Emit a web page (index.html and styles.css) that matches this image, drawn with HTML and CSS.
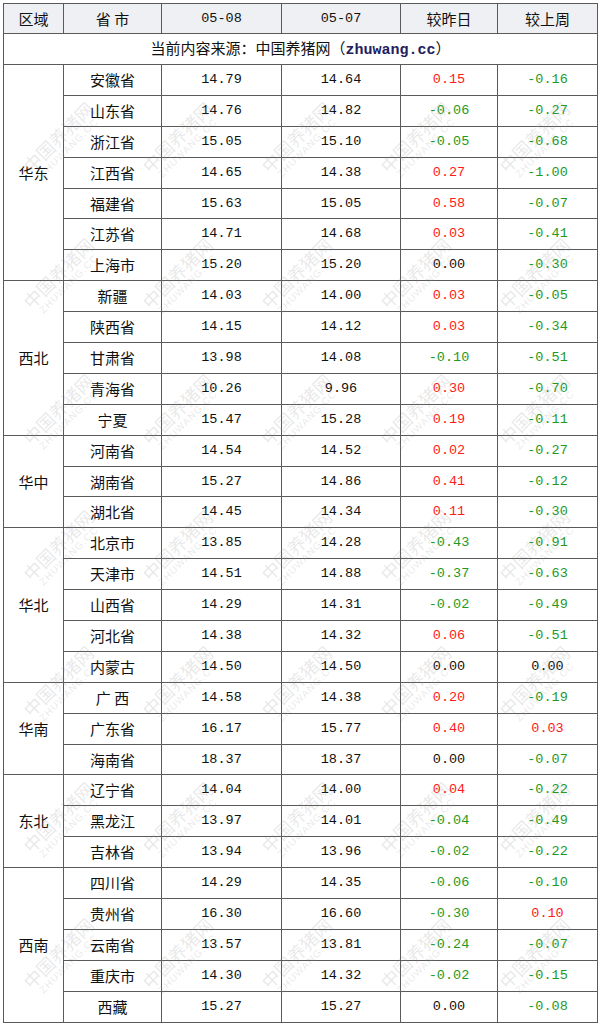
FILE: index.html
```html
<!DOCTYPE html>
<html lang="zh">
<head>
<meta charset="utf-8">
<link rel="stylesheet" href="styles.css">
</head>
<body>
<div class="wrap">
<table class="price">
<colgroup>
<col class="c1"><col class="c2"><col class="c3"><col class="c4"><col class="c5"><col class="c6">
</colgroup>
<thead>
<tr class="head"><th>区域</th><th>省 市</th><th class="num">05-08</th><th class="num">05-07</th><th>较昨日</th><th>较上周</th></tr>
</thead>
<tbody>
<tr class="src"><td colspan="6">当前内容来源：中国养猪网（<b class="site">zhuwang.cc</b>）</td></tr>
<tr><td rowspan="7" class="reg">华东</td><td>安徽省</td><td class="num">14.79</td><td class="num">14.64</td><td class="num up">0.15</td><td class="num dn">-0.16</td></tr>
<tr><td>山东省</td><td class="num">14.76</td><td class="num">14.82</td><td class="num dn">-0.06</td><td class="num dn">-0.27</td></tr>
<tr><td>浙江省</td><td class="num">15.05</td><td class="num">15.10</td><td class="num dn">-0.05</td><td class="num dn">-0.68</td></tr>
<tr><td>江西省</td><td class="num">14.65</td><td class="num">14.38</td><td class="num up">0.27</td><td class="num dn">-1.00</td></tr>
<tr><td>福建省</td><td class="num">15.63</td><td class="num">15.05</td><td class="num up">0.58</td><td class="num dn">-0.07</td></tr>
<tr><td>江苏省</td><td class="num">14.71</td><td class="num">14.68</td><td class="num up">0.03</td><td class="num dn">-0.41</td></tr>
<tr><td>上海市</td><td class="num">15.20</td><td class="num">15.20</td><td class="num">0.00</td><td class="num dn">-0.30</td></tr>
<tr><td rowspan="5" class="reg">西北</td><td>新疆</td><td class="num">14.03</td><td class="num">14.00</td><td class="num up">0.03</td><td class="num dn">-0.05</td></tr>
<tr><td>陕西省</td><td class="num">14.15</td><td class="num">14.12</td><td class="num up">0.03</td><td class="num dn">-0.34</td></tr>
<tr><td>甘肃省</td><td class="num">13.98</td><td class="num">14.08</td><td class="num dn">-0.10</td><td class="num dn">-0.51</td></tr>
<tr><td>青海省</td><td class="num">10.26</td><td class="num">9.96</td><td class="num up">0.30</td><td class="num dn">-0.70</td></tr>
<tr><td>宁夏</td><td class="num">15.47</td><td class="num">15.28</td><td class="num up">0.19</td><td class="num dn">-0.11</td></tr>
<tr><td rowspan="3" class="reg">华中</td><td>河南省</td><td class="num">14.54</td><td class="num">14.52</td><td class="num up">0.02</td><td class="num dn">-0.27</td></tr>
<tr><td>湖南省</td><td class="num">15.27</td><td class="num">14.86</td><td class="num up">0.41</td><td class="num dn">-0.12</td></tr>
<tr><td>湖北省</td><td class="num">14.45</td><td class="num">14.34</td><td class="num up">0.11</td><td class="num dn">-0.30</td></tr>
<tr><td rowspan="5" class="reg">华北</td><td>北京市</td><td class="num">13.85</td><td class="num">14.28</td><td class="num dn">-0.43</td><td class="num dn">-0.91</td></tr>
<tr><td>天津市</td><td class="num">14.51</td><td class="num">14.88</td><td class="num dn">-0.37</td><td class="num dn">-0.63</td></tr>
<tr><td>山西省</td><td class="num">14.29</td><td class="num">14.31</td><td class="num dn">-0.02</td><td class="num dn">-0.49</td></tr>
<tr><td>河北省</td><td class="num">14.38</td><td class="num">14.32</td><td class="num up">0.06</td><td class="num dn">-0.51</td></tr>
<tr><td>内蒙古</td><td class="num">14.50</td><td class="num">14.50</td><td class="num">0.00</td><td class="num">0.00</td></tr>
<tr><td rowspan="3" class="reg">华南</td><td>广 西</td><td class="num">14.58</td><td class="num">14.38</td><td class="num up">0.20</td><td class="num dn">-0.19</td></tr>
<tr><td>广东省</td><td class="num">16.17</td><td class="num">15.77</td><td class="num up">0.40</td><td class="num up">0.03</td></tr>
<tr><td>海南省</td><td class="num">18.37</td><td class="num">18.37</td><td class="num">0.00</td><td class="num dn">-0.07</td></tr>
<tr><td rowspan="3" class="reg">东北</td><td>辽宁省</td><td class="num">14.04</td><td class="num">14.00</td><td class="num up">0.04</td><td class="num dn">-0.22</td></tr>
<tr><td>黑龙江</td><td class="num">13.97</td><td class="num">14.01</td><td class="num dn">-0.04</td><td class="num dn">-0.49</td></tr>
<tr><td>吉林省</td><td class="num">13.94</td><td class="num">13.96</td><td class="num dn">-0.02</td><td class="num dn">-0.22</td></tr>
<tr><td rowspan="5" class="reg">西南</td><td>四川省</td><td class="num">14.29</td><td class="num">14.35</td><td class="num dn">-0.06</td><td class="num dn">-0.10</td></tr>
<tr><td>贵州省</td><td class="num">16.30</td><td class="num">16.60</td><td class="num dn">-0.30</td><td class="num up">0.10</td></tr>
<tr><td>云南省</td><td class="num">13.57</td><td class="num">13.81</td><td class="num dn">-0.24</td><td class="num dn">-0.07</td></tr>
<tr><td>重庆市</td><td class="num">14.30</td><td class="num">14.32</td><td class="num dn">-0.02</td><td class="num dn">-0.15</td></tr>
<tr><td>西藏</td><td class="num">15.27</td><td class="num">15.27</td><td class="num">0.00</td><td class="num dn">-0.08</td></tr>
</tbody>
</table>
<div class="watermark" aria-hidden="true">
<span class="wm">中国养猪网<i>ZHUWANG.CC</i></span><span class="wm">中国养猪网<i>ZHUWANG.CC</i></span><span class="wm">中国养猪网<i>ZHUWANG.CC</i></span><span class="wm">中国养猪网<i>ZHUWANG.CC</i></span><span class="wm">中国养猪网<i>ZHUWANG.CC</i></span>
<span class="wm">中国养猪网<i>ZHUWANG.CC</i></span><span class="wm">中国养猪网<i>ZHUWANG.CC</i></span><span class="wm">中国养猪网<i>ZHUWANG.CC</i></span><span class="wm">中国养猪网<i>ZHUWANG.CC</i></span><span class="wm">中国养猪网<i>ZHUWANG.CC</i></span>
<span class="wm">中国养猪网<i>ZHUWANG.CC</i></span><span class="wm">中国养猪网<i>ZHUWANG.CC</i></span><span class="wm">中国养猪网<i>ZHUWANG.CC</i></span><span class="wm">中国养猪网<i>ZHUWANG.CC</i></span><span class="wm">中国养猪网<i>ZHUWANG.CC</i></span>
<span class="wm">中国养猪网<i>ZHUWANG.CC</i></span><span class="wm">中国养猪网<i>ZHUWANG.CC</i></span><span class="wm">中国养猪网<i>ZHUWANG.CC</i></span><span class="wm">中国养猪网<i>ZHUWANG.CC</i></span><span class="wm">中国养猪网<i>ZHUWANG.CC</i></span>
<span class="wm">中国养猪网<i>ZHUWANG.CC</i></span><span class="wm">中国养猪网<i>ZHUWANG.CC</i></span><span class="wm">中国养猪网<i>ZHUWANG.CC</i></span><span class="wm">中国养猪网<i>ZHUWANG.CC</i></span><span class="wm">中国养猪网<i>ZHUWANG.CC</i></span>
<span class="wm">中国养猪网<i>ZHUWANG.CC</i></span><span class="wm">中国养猪网<i>ZHUWANG.CC</i></span><span class="wm">中国养猪网<i>ZHUWANG.CC</i></span><span class="wm">中国养猪网<i>ZHUWANG.CC</i></span><span class="wm">中国养猪网<i>ZHUWANG.CC</i></span>
<span class="wm">中国养猪网<i>ZHUWANG.CC</i></span><span class="wm">中国养猪网<i>ZHUWANG.CC</i></span><span class="wm">中国养猪网<i>ZHUWANG.CC</i></span><span class="wm">中国养猪网<i>ZHUWANG.CC</i></span><span class="wm">中国养猪网<i>ZHUWANG.CC</i></span>
</div>
</div>
</body>
</html>
```
FILE: styles.css
```css
html, body {
  margin: 0;
  padding: 0;
  background: #ffffff;
}
body {
  padding: 3px;
  font-family: "Noto Sans CJK SC", "Noto Sans", sans-serif;
  color: #1a1a1a;
}
.wrap {
  position: relative;
  width: 594px;
}
.price {
  border-collapse: collapse;
  width: 594px;
  table-layout: fixed;
  font-size: 15px;
  border: 1px solid #555;
}
.c1 { width: 60px; }
.c2 { width: 98px; }
.c3 { width: 120px; }
.c4 { width: 119px; }
.c5 { width: 97px; }
.c6 { width: 100px; }
.price th,
.price td {
  border: 1px solid #5a5a5a;
  text-align: center;
  vertical-align: middle;
  padding: 0;
  line-height: 18px;
  height: 29.9px;
  font-weight: normal;
  color: #111;
}
.head th {
  background: #eef0f4;
  height: 29px;
}
.src td {
  height: 30px;
}
.num {
  font-family: "Liberation Mono", "DejaVu Sans Mono", monospace;
  font-size: 13.5px;
}
.price th.num {
  font-family: "Liberation Mono", monospace;
  font-size: 13.5px;
}
.price td.up { color: #ff1a1a; }
.price td.dn { color: #1e9a1e; }
.site {
  font-family: "Liberation Mono", monospace;
  font-weight: bold;
  color: #23205e;
  font-size: 15px;
}
.watermark {
  position: absolute;
  left: 0;
  top: 70px;
  width: 594px;
  display: grid;
  grid-template-columns: repeat(5, 1fr);
  grid-auto-rows: 136px;
  justify-items: center;
  align-items: center;
  pointer-events: none;
}
.wm {
  display: flex;
  flex-direction: column;
  align-items: center;
  transform: rotate(-45deg);
  color: rgba(140, 140, 140, 0.2);
  font-size: 18px;
  line-height: 20px;
  font-family: "Noto Sans CJK SC", sans-serif;
  white-space: nowrap;
}
.wm i {
  font-style: normal;
  font-size: 10px;
  line-height: 12px;
  letter-spacing: 1px;
  font-family: "Liberation Sans", sans-serif;
}
```
